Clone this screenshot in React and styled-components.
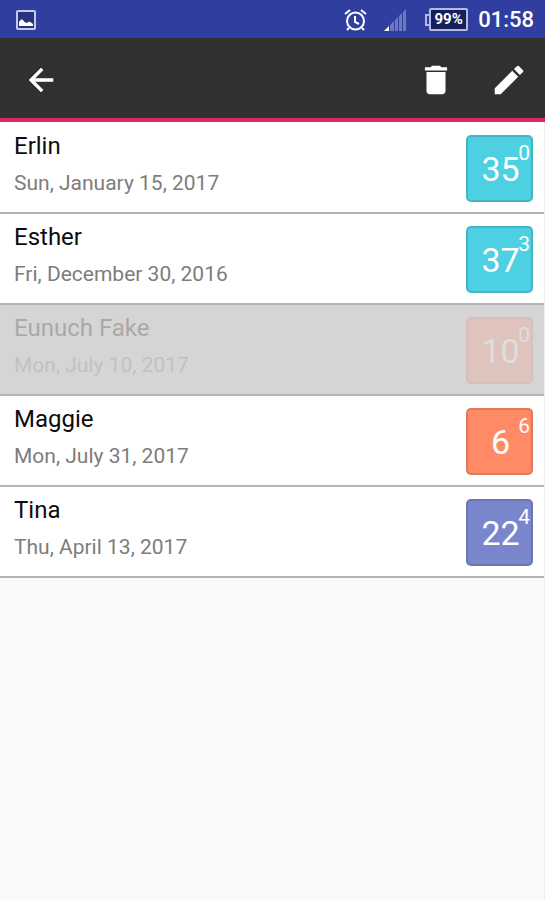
import React from 'react';
import styled, { createGlobalStyle, ThemeProvider } from 'styled-components';

const theme = {
  statusBar: '#303f9f',
  toolbar: '#303030',
  accent: '#d82b62',
  page: '#fafafa',
  divider: '#b4b4b4',
  selected: '#d5d5d5',
  text: '#0c0c0c',
  muted: '#7d7d7d',
  font: "Roboto, 'Liberation Sans', sans-serif",
};

const GlobalStyle = createGlobalStyle`
  *,
  *::before,
  *::after {
    box-sizing: border-box;
  }
  body {
    margin: 0;
    background: ${theme.page};
    font-family: ${theme.font};
  }
`;

const Screen = styled.div`
  display: flex;
  flex-direction: column;
  min-height: 100vh;
  border-right: 1px solid #ececec;
`;

const StatusBar = styled.div`
  display: flex;
  align-items: center;
  justify-content: space-between;
  height: 38px;
  margin-right: -1px;
  padding: 1px 11px 0 16px;
  background: ${p => p.theme.statusBar};
  color: #fff;
`;

const StatusGroup = styled.div`
  display: flex;
  align-items: center;
`;

const AlarmIcon = styled.svg`
  margin-right: 16px;
`;

const SignalIcon = styled.svg`
  margin-right: 18px;
`;

const Battery = styled.div`
  display: flex;
  align-items: center;
  margin-right: 10px;
  &::before {
    content: '';
    width: 4px;
    height: 12px;
    border: 2px solid #b3bbe2;
    border-right: 0;
  }
`;

const BatteryLevel = styled.span`
  width: 39px;
  border: 2px solid #b3bbe2;
  border-radius: 2px;
  background: #141f5c;
  font-size: 15px;
  font-weight: 700;
  line-height: 19px;
  text-align: center;
`;

const Clock = styled.time`
  font-size: 22px;
  font-weight: 500;
  line-height: 36px;
`;

const Toolbar = styled.header`
  display: flex;
  align-items: center;
  justify-content: space-between;
  height: 84px;
  margin-right: -1px;
  padding: 3px 17px 0 23px;
  border-bottom: 4px solid ${p => p.theme.accent};
  background: ${p => p.theme.toolbar};
`;

const Actions = styled.div`
  display: flex;
  gap: 35px;
`;

const IconButton = styled.button`
  display: flex;
  padding: 0;
  border: 0;
  background: none;
  color: #fff;
  cursor: pointer;
`;

const List = styled.ul`
  margin: 0;
  padding: 1px 0 0;
  background: #fff;
  list-style: none;
`;

const Row = styled.li`
  display: flex;
  align-items: center;
  justify-content: space-between;
  height: 91px;
  padding: 2px 11px 0 14px;
  border-bottom: 2px solid ${p => p.theme.divider};
  background: ${p => (p.$selected ? p.theme.selected : '#fff')};
`;

const Details = styled.div`
  display: flex;
  flex-direction: column;
  gap: 8px;
  padding-bottom: 9px;
  opacity: ${p => (p.$selected ? 0.22 : 1)};
`;

const Name = styled.span`
  color: ${p => p.theme.text};
  font-size: 24px;
  line-height: 30px;
`;

const BirthDate = styled.span`
  color: ${p => p.theme.muted};
  font-size: 21px;
  line-height: 28px;
`;

const Age = styled.div`
  position: relative;
  display: flex;
  align-items: center;
  justify-content: center;
  width: 67px;
  height: 67px;
  padding-left: 2px;
  border: 2px solid rgba(0, 0, 0, 0.12);
  border-radius: 5px;
  background: ${p => p.$color};
  color: #fff;
  font-size: 34px;
  line-height: 40px;
  opacity: ${p => (p.$selected ? 0.22 : 1)};
`;

const Months = styled.sup`
  position: absolute;
  top: 4px;
  right: 1px;
  font-size: 21px;
  line-height: 24px;
`;

const people = [
  { name: 'Erlin', date: 'Sun, January 15, 2017', years: 35, months: 0, color: '#4dd0e1' },
  { name: 'Esther', date: 'Fri, December 30, 2016', years: 37, months: 3, color: '#4dd0e1' },
  { name: 'Eunuch Fake', date: 'Mon, July 10, 2017', years: 10, months: 0, color: '#ff8a65', selected: true },
  { name: 'Maggie', date: 'Mon, July 31, 2017', years: 6, months: 6, color: '#ff8a65' },
  { name: 'Tina', date: 'Thu, April 13, 2017', years: 22, months: 4, color: '#7986cb' },
];

const PictureGlyph = () => (
  <svg width="20" height="20" viewBox="0 0 20 20" aria-hidden="true">
    <rect x="1" y="1" width="18" height="18" rx="1" fill="#26337f" stroke="#c3caec" strokeWidth="2" />
    <path d="M3 16v-4l2-2.500h1.500l2 2.500 2 1 3-1.500 3.500 2.500v2z" fill="#fff" />
  </svg>
);

const AlarmGlyph = () => (
  <AlarmIcon width="23" height="24" viewBox="0 0 23 24" fill="none" stroke="#fff" strokeWidth="2" aria-hidden="true">
    <circle cx="11.5" cy="13" r="8.5" />
    <path d="M11 8v6l4 2M1 6l5-4M22 6l-5-4M5 20l-2 2M18 20l2 2" />
  </AlarmIcon>
);

const SignalGlyph = () => (
  <SignalIcon width="24" height="24" viewBox="0 0 24 24" aria-hidden="true">
    <path d="M1 23l5-5v5z" fill="#fff" />
    <path d="M7 23v-6l4-4v10zM12 23V12l3-3v14zM16 23V8l3-3v18zM20 23V4l3-3v22z" fill="#6b77bf" />
  </SignalIcon>
);

const BackGlyph = () => (
  <svg width="36" height="36" viewBox="0 0 24 24" fill="currentColor" stroke="currentColor" strokeWidth="0.4" aria-hidden="true">
    <path d="M20 11H7.83l5.59-5.59L12 4l-8 8 8 8 1.41-1.41L7.83 13H20v-2z" />
  </svg>
);

const DeleteGlyph = () => (
  <svg width="38" height="38" viewBox="0 0 24 24" fill="currentColor" aria-hidden="true">
    <path d="M6 19c0 1.1.9 2 2 2h8c1.1 0 2-.9 2-2V7H6v12zM19 4h-3.500l-1-1h-5l-1 1H5v2h14V4z" />
  </svg>
);

const EditGlyph = () => (
  <svg width="38" height="38" viewBox="0 0 24 24" fill="currentColor" aria-hidden="true">
    <path d="M3 17.250V21h3.750L17.810 9.940l-3.750-3.750L3 17.250zM20.710 7.040a1 1 0 0 0 0-1.410l-2.340-2.340a1 1 0 0 0-1.410 0l-1.830 1.830 3.750 3.750 1.830-1.830z" />
  </svg>
);

const PersonRow = ({ name, date, years, months, color, selected }) => (
  <Row $selected={selected}>
    <Details $selected={selected}>
      <Name>{name}</Name>
      <BirthDate>{date}</BirthDate>
    </Details>
    <Age $color={color} $selected={selected}>
      {years}
      <Months>{months}</Months>
    </Age>
  </Row>
);

const App = () => (
  <ThemeProvider theme={theme}>
    <GlobalStyle />
    <Screen>
      <StatusBar>
        <PictureGlyph />
        <StatusGroup>
          <AlarmGlyph />
          <SignalGlyph />
          <Battery>
            <BatteryLevel>99%</BatteryLevel>
          </Battery>
          <Clock>01:58</Clock>
        </StatusGroup>
      </StatusBar>
      <Toolbar>
        <IconButton type="button" aria-label="Back">
          <BackGlyph />
        </IconButton>
        <Actions>
          <IconButton type="button" aria-label="Delete">
            <DeleteGlyph />
          </IconButton>
          <IconButton type="button" aria-label="Edit">
            <EditGlyph />
          </IconButton>
        </Actions>
      </Toolbar>
      <List>
        {people.map(person => (
          <PersonRow key={person.name} {...person} />
        ))}
      </List>
    </Screen>
  </ThemeProvider>
);

export default App;
